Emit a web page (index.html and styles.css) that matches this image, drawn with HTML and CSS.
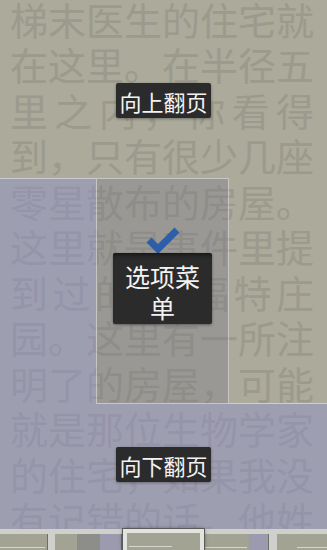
FILE: index.html
```html
<!DOCTYPE html>
<html lang="zh-CN">
<head>
<meta charset="utf-8">
<title>阅读</title>
<link rel="stylesheet" href="styles.css">
</head>
<body>
<div class="page">
  <div class="text">
    <div class="line">梯末医生的住宅就</div>
    <div class="line">在这里。在半径五</div>
    <div class="line spread"><span>里</span><span>之</span><span>内</span><span>，</span><span>你</span><span>看</span><span>得</span></div>
    <div class="line">到，只有很少几座</div>
    <div class="line">零星散布的房屋。</div>
    <div class="line">这里就是事件里提</div>
    <div class="line split"><span>到</span><span>过</span><span>的</span><span class="after-gap">福</span><span>特</span><span>庄</span></div>
    <div class="line">园。这里有一所注</div>
    <div class="line">明了的房屋，可能</div>
    <div class="line">就是那位生物学家</div>
    <div class="line">的住宅，如果我没</div>
    <div class="line">有记错的话，他姓</div>
  </div>

  <div class="zones">
    <div class="zone z-top"><div class="label">向上翻页</div></div>
    <div class="zone z-left"></div>
    <div class="zone z-center">
      <svg class="check" width="34" height="26" viewBox="0 0 34 26" aria-hidden="true">
        <polyline points="3,12 12,21 31,2" fill="none" stroke="#2e5ea8" stroke-width="7"/>
      </svg>
      <div class="menu">选项菜单</div>
    </div>
    <div class="zone z-right"></div>
    <div class="zone z-bottom"><div class="label">向下翻页</div></div>
  </div>

  <div class="toolbar">
    <div class="thumb t1"><div class="mini-line"></div></div>
    <div class="thumb t2">
      <div class="part khaki"></div>
      <div class="part grey"></div>
      <div class="part blue"></div>
    </div>
    <div class="thumb sel"><div class="mini-line short"></div></div>
    <div class="thumb t4">
      <div class="part khaki wide"><div class="mini-line"></div></div>
      <div class="part blue narrow"></div>
    </div>
    <div class="thumb t5"><div class="mini-line right"></div></div>
  </div>
</div>
</body>
</html>
```

FILE: styles.css
```css
html, body {
  margin: 0;
  padding: 0;
  background: #abaa9b;
}

body {
  overflow: hidden;
}

.page {
  position: relative;
  width: 327px;
  height: 550px;
  overflow: hidden;
  background: #abaa9b;
  font-family: "Noto Sans CJK SC", "Noto Sans", sans-serif;
}

/* ---------- book text ---------- */
.text {
  margin-top: -4px;
  padding-left: 10px;
  color: #9b9a8c;
  font-size: 38px;
  line-height: 45.45px;
}

.line {
  width: 304px;
  white-space: nowrap;
}

.spread {
  display: flex;
  justify-content: space-between;
}

.split {
  display: flex;
  gap: 4.5px;
}

.after-gap {
  margin-left: 53.5px;
}

/* ---------- tap zones ---------- */
.zones {
  position: absolute;
  top: 0;
  left: 0;
  right: 0;
  bottom: 21px;
  display: grid;
  grid-template-columns: 96px 133px 1fr;
  grid-template-rows: 178px 226px 1fr;
}

.zone {
  box-sizing: border-box;
}

.z-top {
  grid-column: 1 / 4;
  display: flex;
  justify-content: center;
  align-items: flex-start;
  padding-top: 83px;
}

.z-left {
  background: rgba(140, 140, 210, 0.4);
  border-top: 1px solid rgba(255, 255, 255, 0.45);
}

.z-center {
  background: rgba(110, 110, 130, 0.29);
  border: 1px solid rgba(255, 255, 255, 0.45);
  display: flex;
  flex-direction: column;
  align-items: center;
  padding-top: 49px;
}

.z-right {
  border-bottom: 1px solid rgba(255, 255, 255, 0.45);
}

.z-bottom {
  grid-column: 1 / 4;
  background: rgba(140, 140, 210, 0.4);
  display: flex;
  justify-content: center;
  align-items: flex-start;
  padding-top: 43px;
}

.label {
  box-sizing: border-box;
  height: 35px;
  padding: 2px 3px 0;
  line-height: 33px;
  font-size: 22px;
  color: #f2f2f2;
  background: #2b2b2b;
  border-radius: 2px;
  box-shadow: 0 1px 3px rgba(0, 0, 0, 0.35);
  white-space: nowrap;
}

.check {
  display: block;
  overflow: visible;
}

.menu {
  box-sizing: border-box;
  width: 99px;
  margin-top: -1px;
  padding: 8px 10px 1px;
  font-size: 25px;
  line-height: 31px;
  text-align: center;
  color: #f2f2f2;
  background: #2b2b2b;
  border-radius: 2px;
  box-shadow: 0 1px 3px rgba(0, 0, 0, 0.4), inset 0 6px 4px -4px rgba(0, 0, 0, 0.5);
}

/* ---------- bottom thumbnail strip ---------- */
.toolbar {
  position: absolute;
  left: 0;
  bottom: 0;
  width: 327px;
  height: 21px;
  background: #cfcfcc;
  display: flex;
  align-items: flex-end;
}

.thumb {
  position: relative;
  box-sizing: border-box;
  height: 16px;
  background: #a3a393;
}

.t1 {
  width: 48px;
  border-right: 1px solid #6e6e68;
  margin-right: 7px;
}

.t2 {
  width: 67px;
  display: flex;
  border-right: 1px solid #6e6e68;
}

.part {
  position: relative;
  height: 100%;
}

.khaki {
  width: 22px;
  background: #a3a393;
}

.grey {
  width: 23px;
  background: #8d8d89;
}

.blue {
  width: 21px;
  background: #9b9aae;
}

.sel {
  width: 81px;
  height: 21px;
  margin: 0 1px;
  border: 4px solid #e3e3e0;
  border-bottom: none;
  background: #a3a393;
  box-shadow: 0 0 0 1px #5a5a58, 0 0 4px rgba(0, 0, 0, 0.55);
  z-index: 1;
}

.t4 {
  width: 64px;
  display: flex;
  border-right: 1px solid #6e6e68;
  margin-right: 8px;
}

.wide {
  width: 44px;
}

.narrow {
  width: 19px;
}

.t5 {
  flex: 1;
}

.mini-line {
  position: absolute;
  left: 0;
  right: 2px;
  bottom: 2px;
  height: 1px;
  background: #d6d6d0;
}

.mini-line.short {
  left: 2px;
  right: 28px;
  bottom: 3px;
}

.mini-line.right {
  left: 20px;
  right: 0;
}
```
